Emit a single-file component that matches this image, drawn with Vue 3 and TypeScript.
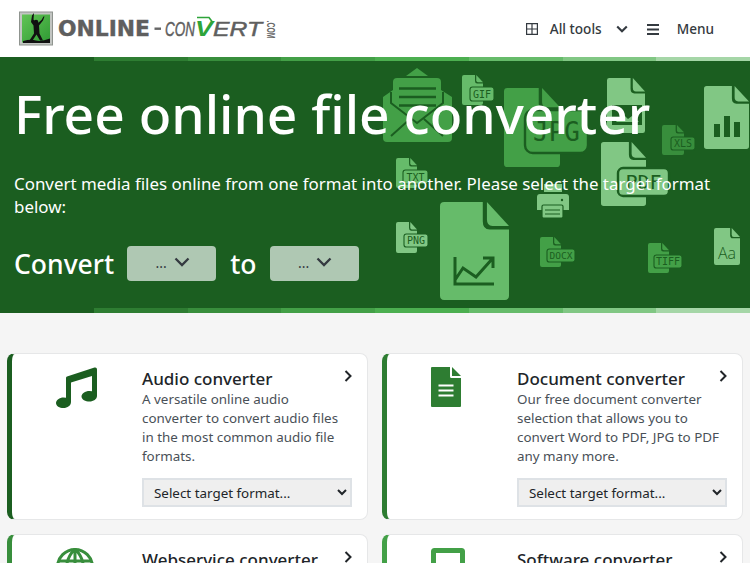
<script setup lang="ts">
interface FileIcon {
  x: number; y: number; w: number; h: number; color: string;
  label?: string; lx?: number; ly?: number; lw?: number; lh?: number; fs?: number;
}

const icons: FileIcon[] = [
  { x: 462, y: 75, w: 21, h: 30, color: '#66bb6a', label: 'GIF', lx: 470, ly: 87, lw: 24, lh: 14, fs: 10 },
  { x: 504, y: 88, w: 56, h: 79, color: '#43a047', label: 'JPG', lx: 525, ly: 110, lw: 63, lh: 43, fs: 26 },
  { x: 607, y: 78, w: 38, h: 55, color: '#81c784' },
  { x: 662, y: 125, w: 22, h: 30, color: '#388e3c', label: 'XLS', lx: 671, ly: 137, lw: 24, lh: 13, fs: 10 },
  { x: 704, y: 86, w: 45, h: 63, color: '#81c784' },
  { x: 601, y: 142, w: 45, h: 64, color: '#81c784', label: 'PDF', lx: 618, ly: 168, lw: 51, lh: 28, fs: 20 },
  { x: 396, y: 158, w: 21, h: 30, color: '#66bb6a', label: 'TXT', lx: 403, ly: 170, lw: 25, lh: 14, fs: 10 },
  { x: 396, y: 222, w: 21, h: 31, color: '#81c784', label: 'PNG', lx: 404, ly: 234, lw: 24, lh: 13, fs: 10 },
  { x: 440, y: 202, w: 69, h: 98, color: '#66bb6a' },
  { x: 540, y: 237, w: 21, h: 30, color: '#43a047', label: 'DOCX', lx: 547, ly: 249, lw: 28, lh: 13, fs: 9.5 },
  { x: 648, y: 243, w: 21, h: 30, color: '#43a047', label: 'TIFF', lx: 654, ly: 255, lw: 28, lh: 13, fs: 10 },
  { x: 714, y: 228, w: 26, h: 37, color: '#81c784' },
];

function bodyPath(w: number, h: number): string {
  const r = Math.max(2, w * 0.06);
  const c = w * 0.62;
  const f = h * 0.28;
  return `M${r} 0H${c}V${f * 0.7}Q${c} ${f} ${w * 0.72} ${f}H${w}V${h - r}Q${w} ${h} ${w - r} ${h}H${r}Q0 ${h} 0 ${h - r}V${r}Q0 0 ${r} 0Z`;
}

function foldPath(w: number, h: number): string {
  const s = w * 0.68;
  const f = h * 0.245;
  return `M${s} 0L${w} ${f}H${w * 0.76}Q${s} ${f} ${s} ${f * 0.72}Z`;
}

const strip = ['#1b5e20', '#2e7d32', '#388e3c', '#43a047', '#4caf50', '#66bb6a', '#81c784', '#a5d6a7'];

const cards = [
  {
    title: 'Audio converter',
    text: 'A versatile online audio converter to convert audio files in the most common audio file formats.',
    color: '#1b5e20',
    kind: 'audio',
  },
  {
    title: 'Document converter',
    text: 'Our free document converter selection that allows you to convert Word to PDF, JPG to PDF any many more.',
    color: '#2e7d32',
    kind: 'doc',
  },
  {
    title: 'Webservice converter',
    text: 'Convert files with our webservice and automate your conversions.',
    color: '#388e3c',
    kind: 'web',
  },
  {
    title: 'Software converter',
    text: 'Convert software and application packages for desktop use.',
    color: '#43a047',
    kind: 'soft',
  },
];
</script>

<template>
  <div class="page">
    <header class="topbar">
      <svg class="logo" width="262" height="36" viewBox="0 0 262 36" role="img" aria-label="Online-Convert.com logo">
        <defs>
          <linearGradient id="lg" x1="0" y1="0" x2="1" y2="1">
            <stop offset="0" stop-color="#62c455" />
            <stop offset="1" stop-color="#2f9a34" />
          </linearGradient>
        </defs>
        <rect x="0.5" y="1" width="33" height="33" fill="#c2c5c2" stroke="#8f948f" />
        <rect x="3" y="3.5" width="28" height="28" fill="url(#lg)" />
        <circle cx="17" cy="11" r="2.300" fill="#111" />
        <path d="M13 4.500 12 11l2.500 3.500.5 8-4.500 7h3l4-6 3.500 6h3l-3.500-7-.5-8 4-5 1.500-4h-1l-2 3.500-3 2.500h-3l-2-3 .5-6.500Z" fill="#111" />
        <path d="M4 32V30q8-2 13-.5t14-2V32Z" fill="#111" />
        <text x="39" y="24.500" class="lg-online" textLength="92" lengthAdjust="spacingAndGlyphs">ONLINE</text>
        <rect x="135.500" y="16.500" width="6.500" height="2.400" fill="#666" />
        <text x="146" y="24.500" class="lg-convert" textLength="30" lengthAdjust="spacingAndGlyphs">CON</text>
        <text x="176" y="24.500" class="lg-v" textLength="18" lengthAdjust="spacingAndGlyphs">V</text>
        <path d="M178 6.500H190L193 10.500" fill="none" stroke="#2ea43a" stroke-width="1.600" />
        <text x="194" y="24.500" class="lg-convert" textLength="49" lengthAdjust="spacingAndGlyphs">ERT</text>
        <text transform="translate(248 9.500) rotate(90)" class="lg-com" textLength="18" lengthAdjust="spacingAndGlyphs">.COM</text>
      </svg>
      <nav class="nav">
        <svg class="i-grid" width="12" height="12" viewBox="0 0 12 12"><path d="M.6.6h10.800v10.800H.6zM6 .6v10.800M.6 6h10.800" fill="none" stroke="#343a40" stroke-width="1.200" /></svg>
        <span class="nav-label">All tools</span>
        <svg class="i-chev" width="12" height="8" viewBox="0 0 12 8"><path d="M1.200 1.400 6 6.200l4.800-4.800" fill="none" stroke="#343a40" stroke-width="2.100" /></svg>
        <svg class="i-burger" width="12" height="11" viewBox="0 0 12 11"><path d="M0 1h12M0 5.500h12M0 10h12" fill="none" stroke="#343a40" stroke-width="1.800" /></svg>
        <span class="nav-label">Menu</span>
      </nav>
    </header>

    <section class="hero">
      <div class="strip strip-top">
        <i v-for="c in strip" :key="c" :style="{ background: c }"></i>
      </div>
      <svg class="hero-art" width="750" height="256" viewBox="0 57 750 256" aria-hidden="true">
        <g class="envelope">
          <path d="M417 68l11 8h-22z" fill="#43a047" />
          <path d="M383 97l10-7v-8q0-4 4-4h40q4 0 4 4v8l11 7v41q0 4-4 4h-61q-4 0-4-4z" fill="#43a047" />
          <path d="M399 88.500h37M399 97h37M399 105.500h37" stroke="#1b5e20" stroke-width="2.400" />
          <path d="M391 92v11l26 20 26-20V92M391 136l19-17M443 136l-19-17" fill="none" stroke="#1b5e20" stroke-width="2" />
        </g>
        <g v-for="ic in icons" :key="`${ic.x}-${ic.y}`">
          <g :transform="`translate(${ic.x} ${ic.y})`">
            <path :d="bodyPath(ic.w, ic.h)" :fill="ic.color" />
            <path :d="foldPath(ic.w, ic.h)" :fill="ic.color" />
          </g>
          <g v-if="ic.label">
            <rect :x="ic.lx" :y="ic.ly" :width="ic.lw" :height="ic.lh" :rx="Math.max(2, (ic.lh ?? 0) * 0.18)" :fill="ic.color" stroke="#1b5e20" :stroke-width="(ic.fs ?? 10) > 15 ? 2.400 : 1.100" />
            <text :x="(ic.lx ?? 0) + (ic.lw ?? 0) / 2" :y="(ic.ly ?? 0) + (ic.lh ?? 0) / 2 + (ic.fs ?? 10) * 0.36" :font-size="ic.fs" class="art-label">{{ ic.label }}</text>
          </g>
        </g>
        <path d="M612 105h30v20h-30z" fill="#1b5e20" />
        <path d="M616 122l7-8 5 5 4-3 7 6z" fill="#81c784" />
        <path d="M714 124h6v13h-6zM724 116h6v21h-6zM734 122h6v15h-6z" fill="#1b5e20" />
        <path d="M455 257v27h39M455 280l8-12 13 9 17-19M483 258h10v10" fill="none" stroke="#1b5e20" stroke-width="3" />
        <text x="727" y="259" class="art-aa">Aa</text>
        <g class="printer">
          <path d="M544 184h18v8h-18z" fill="#81c784" />
          <path d="M537 197q0-3 3-3h26q3 0 3 3v13h-32z" fill="#81c784" />
          <circle cx="562" cy="200" r="1.200" fill="#1b5e20" />
          <rect x="542" y="205" width="21" height="13" rx="1.500" fill="#81c784" stroke="#1b5e20" stroke-width="1.200" />
          <path d="M545 210h15M545 214h15" stroke="#1b5e20" stroke-width="1" />
        </g>
      </svg>
      <div class="hero-body">
        <h1 class="hero-title">Free online file converter</h1>
        <p class="hero-text">Convert media files online from one format into another. Please select the target format below:</p>
        <div class="convert">
          <span class="convert-word">Convert</span>
          <div class="pick"><span class="dots">...</span><svg width="16" height="10" viewBox="0 0 16 10"><path d="M1.500 1.500 8 8l6.500-6.500" fill="none" stroke="#343a40" stroke-width="2.300" /></svg></div>
          <span class="convert-word">to</span>
          <div class="pick"><span class="dots">...</span><svg width="16" height="10" viewBox="0 0 16 10"><path d="M1.500 1.500 8 8l6.500-6.500" fill="none" stroke="#343a40" stroke-width="2.300" /></svg></div>
        </div>
      </div>
      <div class="strip strip-bottom">
        <i v-for="c in strip" :key="c" :style="{ background: c }"></i>
      </div>
    </section>

    <main class="cards">
      <article v-for="card in cards" :key="card.title" class="card" :style="{ borderLeftColor: card.color }">
        <div class="card-icon">
          <svg v-if="card.kind === 'audio'" width="41" height="41" viewBox="0 0 41 41">
            <path d="M11 9.500 38.500.5Q41 0 41 2.500V29c0 3-3.500 5.500-7.500 5.500S25.500 32.500 25.500 29.500 29 24 33.500 24q1.500 0 2.500.3V9L15 15.500V35c0 3.500-3.500 6-7.500 6S0 39 0 36s3.500-5.500 7.500-5.500q1.500 0 2.500.3V11q0-1.200 1-1.500Z" :fill="card.color" />
          </svg>
          <svg v-else-if="card.kind === 'doc'" width="30" height="40" viewBox="0 0 30 40">
            <path d="M1 0h18v9.500q0 1.500 1.500 1.500H30v28q0 1-1 1H1q-1 0-1-1V1q0-1 1-1Z" :fill="card.color" />
            <path d="M21 0l9 9h-9Z" :fill="card.color" />
            <path d="M7.500 18.500h15M7.500 23.500h15M7.500 28.500h15" stroke="#fff" stroke-width="2.200" />
          </svg>
          <svg v-else-if="card.kind === 'web'" width="38" height="38" viewBox="0 0 38 38">
            <circle cx="19" cy="19" r="17.500" fill="none" :stroke="card.color" stroke-width="3" />
            <path d="M19 1c-11 11-11 25 0 36M19 1c11 11 11 25 0 36M19 1v36M2 13h34M2 25h34" fill="none" :stroke="card.color" stroke-width="3" />
          </svg>
          <svg v-else width="34" height="30" viewBox="0 0 34 30">
            <rect x="2.500" y="2.500" width="29" height="20" rx="1" fill="none" :stroke="card.color" stroke-width="5" />
            <path d="M12 26h10v4H12z" :fill="card.color" />
          </svg>
        </div>
        <div class="card-main">
          <h2 class="card-title">{{ card.title }}</h2>
          <p class="card-text">{{ card.text }}</p>
          <select class="card-select" aria-label="Target format">
            <option>Select target format...</option>
          </select>
        </div>
        <svg class="card-arrow" width="8" height="12" viewBox="0 0 8 12"><path d="M1.500 1 6.500 6l-5 5" fill="none" stroke="#212529" stroke-width="2" /></svg>
      </article>
    </main>
  </div>
</template>

<style>
html, body { margin: 0; background: #f5f5f5; overflow: hidden; }
</style>

<style scoped>
* { box-sizing: border-box; }
.page {
  width: 750px;
  height: 563px;
  overflow: hidden;
  font-family: "Noto Sans", "Open Sans", sans-serif;
  background: #f5f5f5;
  color: #212529;
}
.topbar {
  height: 57px;
  background: #fff;
  display: flex;
  align-items: center;
  justify-content: space-between;
  padding: 0 36px 0 19px;
}
.logo { display: block; }
.lg-online { font: 700 20.500px "DejaVu Sans", sans-serif; fill: #5f5f5f; stroke: #5f5f5f; stroke-width: .4px; }
.lg-convert { font: italic 400 21px "Liberation Sans", sans-serif; fill: #5f5f5f; stroke: #5f5f5f; stroke-width: .5px; }
.lg-v { font: italic 700 22px "Liberation Sans", sans-serif; fill: #2ea43a; }
.lg-com { font: 700 10px "Liberation Sans", sans-serif; fill: #666; }
.nav { display: flex; align-items: center; margin-top: 1px; }
.nav-label { font-size: 13.600px; font-weight: 500; color: #343a40; line-height: 20px; }
.i-grid { margin-right: 12px; }
.i-chev { margin: 0 19px 0 14px; }
.i-burger { margin-right: 18px; }

.hero {
  position: relative;
  height: 256px;
  background: #1b5e20;
  overflow: hidden;
}
.strip { position: absolute; left: 0; right: 0; height: 5px; display: flex; z-index: 1; }
.strip i { flex: 1; display: block; }
.strip-top { top: 0; height: 4px; }
.strip-bottom { bottom: 0; }
.hero-art { position: absolute; left: 0; top: 0; }
.art-label { font-family: "DejaVu Sans Mono", monospace; fill: #1b5e20; text-anchor: middle; }
.art-aa { font-family: "Open Sans", sans-serif; font-size: 16px; font-weight: 300; fill: #1b5e20; text-anchor: middle; }
.hero-body { position: relative; z-index: 2; padding: 19px 14px 0; color: #fff; }
.hero-title {
  margin: 0;
  font-size: 53.300px;
  line-height: 76px;
  font-weight: 500;
  white-space: nowrap;
}
.hero-text {
  margin: 20px 0 0;
  font-size: 16.920px;
  line-height: 23px;
}
.convert { display: flex; align-items: center; margin-top: 27px; }
.convert-word { font-size: 26.500px; line-height: 34px; padding-top: 2px; font-weight: 500; }
.pick {
  width: 89px;
  height: 35px;
  margin: 0 14px 0 13px;
  border-radius: 4px;
  background: #afc8b3;
  display: flex;
  align-items: center;
  justify-content: center;
  gap: 7px;
  padding-left: 2px;
}
.dots { font-size: 14px; color: #343a40; line-height: 20px; }
.pick svg { margin-top: -2px; }

.cards {
  display: grid;
  grid-template-columns: 1fr 1fr;
  gap: 14px;
  padding: 40px 7px 0;
}
.card {
  position: relative;
  height: 167px;
  background: #fff;
  border: 1px solid #e6e7e8;
  border-left: 5px solid #1b5e20;
  border-radius: 8px;
  display: flex;
  padding: 13px 15px 12px 0;
}
.card-icon {
  width: 130px;
  flex: none;
  padding-left: 44px;
}
.card-icon svg { display: block; }
.card-main { flex: 1; min-width: 0; display: flex; flex-direction: column; }
.card-title {
  margin: 0;
  font-size: 17px;
  line-height: 23px;
  font-weight: 500;
  color: #212529;
}
.card-text {
  margin: 0;
  font-size: 13.400px;
  line-height: 19px;
  color: #495057;
}
.card-select {
  width: 210px;
  height: 29px;
  margin-top: auto;
  padding: 0 6px;
  font: 400 13.400px "Noto Sans", sans-serif;
  color: #212529;
  background: #efefef;
  border: 2px solid #dee2e6;
  border-radius: 0;
}
.card-arrow { position: absolute; right: 15px; top: 16px; }
</style>
